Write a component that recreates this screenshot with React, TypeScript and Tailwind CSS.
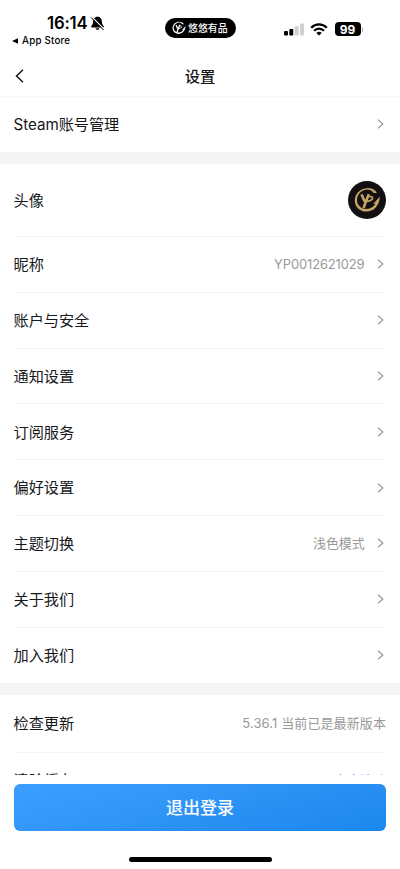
import type { ReactNode } from "react";
import clsx from "clsx";

const FONT = "font-['Inter','Noto_Sans_CJK_SC',sans-serif]";

interface Item {
  label: string;
  value?: string;
}

const items: Item[] = [
  { label: "昵称", value: "YP0012621029" },
  { label: "账户与安全" },
  { label: "通知设置" },
  { label: "订阅服务" },
  { label: "偏好设置" },
  { label: "主题切换", value: "浅色模式" },
  { label: "关于我们" },
  { label: "加入我们" },
];

function Chevron() {
  return (
    <svg width="7" height="10" viewBox="0 0 7 10" fill="none" className="ml-3 mr-[2.5px] shrink-0">
      <path d="M1 .6 5.8 5 1 9.4" stroke="#909094" strokeWidth="1.1" />
    </svg>
  );
}

function BrandMark({ className, color }: { className: string; color: string }) {
  return (
    <svg viewBox="0 0 38 38" fill="none" className={className}>
      {/* Open ring ending in an arrow head on the right */}
      <path
        d="M28.600 11.800C26.500 8.200 22.500 6.600 18.300 7.100 11.500 7.800 6.700 13 6.700 19.200c0 6.300 5 11 11.300 11 7.300 0 12.600-5.200 13.600-14.900l-6.800 7.300 2.300-.3c-1.600 3.500-4.800 5.300-8.600 5.300-5.400 0-9.400-3.500-9.600-8.400-.2-5.700 4-10 9.600-10.800 2.900-.4 5 .9 6.700 3.400z"
        fill={color}
      />
      <path d="M13.300 13.200 16.600 20.500M20.500 13l-5.200 13.600" stroke={color} strokeWidth="2.500" />
      <path d="M20.200 15.600c5.700-1.600 5.600 3.700-1.400 4.500" stroke={color} strokeWidth="1.600" />
    </svg>
  );
}

function Row({
  label,
  children,
  className = "h-[55.8px] border-[#f5f5f5]",
}: {
  label: string;
  children?: ReactNode;
  className?: string;
}) {
  return (
    <div className={clsx("mx-[14px] flex shrink-0 items-center border-b", className)}>
      <span className="-ml-[0.5px] flex-1 pt-px text-[15.2px] leading-none tracking-[-0.05px] text-[#17181c]">
        {label}
      </span>
      {children}
    </div>
  );
}

function StatusBar() {
  return (
    <div className="flex h-[56px] shrink-0 text-black">
      <div className="w-[164.5px] pt-[13px]">
        <div className="flex h-[20px] items-center pl-[47px]">
          <span className="text-[16.8px] font-semibold leading-[20px] tracking-[-0.2px]">16:14</span>
          <svg width="15" height="15" viewBox="0 0 15 15" className="ml-[3px]">
            <path
              d="M7.500.8C4.300.8 3.200 3.300 3.100 5.600 3 8.300 2.300 9 1.300 10.100c-.4.5-.2 1.300.5 1.300h11.400c.7 0 .9-.8.5-1.300-1-1.100-1.700-1.800-1.800-4.500C11.800 3.300 10.700.8 7.500.8z"
              fill="#000"
            />
            <path d="M5.600 12.300h3.800c-.3 2-3.500 2-3.800 0z" fill="#000" />
            <path d="M2.100 1.300 13.700 12.900" stroke="#fff" strokeWidth="1.300" />
            <path d="M1.200 1.600 13.500 13.900" stroke="#000" strokeWidth="1" strokeLinecap="round" />
          </svg>
        </div>
        <div className="flex h-[14px] items-center pt-px pl-[12px]">
          <svg width="6" height="6" viewBox="0 0 6 6">
            <path d="M0 3 6 .2v5.600z" fill="#000" />
          </svg>
          <span className="ml-[4px] text-[9.800px] font-medium leading-[14px] tracking-[0.200px]">
            App Store
          </span>
        </div>
      </div>
      <div className="mt-[18px] flex h-[20px] w-[71px] items-center rounded-full bg-black pl-[4.500px] text-white">
        <BrandMark className="size-[20px]" color="#fff" />
        <span className="-ml-px pt-px text-[9.900px] font-medium leading-none whitespace-nowrap">悠悠有品</span>
      </div>
      <div className="mt-[22px] ml-[48px] flex h-[14px] items-center">
        <svg width="20" height="13" viewBox="0 0 20 13">
          <rect x="0" y="8" width="4" height="4.500" rx="1" fill="#000" />
          <rect x="5.300" y="6" width="4" height="6.500" rx="1" fill="#000" />
          <rect x="10.700" y="3.200" width="4" height="9.300" rx="1" fill="#d0d0d0" />
          <rect x="16" y=".5" width="4" height="12" rx="1" fill="#d0d0d0" />
        </svg>
        <svg width="18" height="13" viewBox="0 0 18 13" fill="none" className="ml-[6px]">
          <path d="M1.200 4.800c4.400-4.500 11.200-4.500 15.600 0" stroke="#000" strokeWidth="2.300" />
          <path d="M4 7.700c2.900-2.900 7.100-2.900 10 0" stroke="#000" strokeWidth="2.200" />
          <path d="M9 12.500 6.300 9.900c1.500-1.400 3.900-1.400 5.400 0z" fill="#000" />
        </svg>
        <div className="ml-[7px] flex h-[14px] w-[26px] items-center justify-center rounded-[4px] bg-black pt-px text-[12px] font-bold leading-none text-white">
          99
        </div>
        <div className="ml-px h-[5px] w-[1.500px] rounded-r-full bg-[#aaa]" />
      </div>
    </div>
  );
}

export default function App() {
  return (
    <div className={clsx("flex h-[869px] w-[400px] flex-col overflow-hidden bg-white", FONT)}>
      <StatusBar />

      {/* Title bar */}
      <header className="grid h-[41px] shrink-0 grid-cols-3 items-center border-b border-[#f7f7f7] px-[15px]">
        <svg width="9" height="14" viewBox="0 0 9 14" fill="none">
          <path d="M8 .7 1.500 7 8 13.300" stroke="#17181c" strokeWidth="1.500" />
        </svg>
        <h1 className="pt-px text-center text-[15.300px] font-medium leading-none text-[#17181c]">设置</h1>
      </header>

      {/* Scrolling list, cut off above the footer */}
      <main className="flex h-[678px] shrink-0 flex-col overflow-hidden">
        <Row label="Steam账号管理" className="h-[55px] border-transparent">
          <Chevron />
        </Row>
        <div className="h-[12px] shrink-0 bg-[#f4f4f4]" />

        <div className="mx-[14px] flex h-[73px] shrink-0 items-center justify-between border-b border-[#f5f5f5]">
          <span className="-ml-[0.5px] pt-px text-[15.200px] leading-none text-[#17181c]">头像</span>
          <div className="size-[38.500px] rounded-full bg-[#121013]">
            <BrandMark className="size-full" color="#c9a563" />
          </div>
        </div>
        {items.map((item) => (
          <Row
            key={item.label}
            label={item.label}
            className={
              item.label === "加入我们" ? "h-[55.5px] border-transparent" : "h-[55.8px] border-[#f5f5f5]"
            }
          >
            {item.value && (
              <span className="pt-px text-[13px] leading-none tracking-[-0.15px] text-[#999]">
                {item.value}
              </span>
            )}
            <Chevron />
          </Row>
        ))}

        <div className="h-[12px] shrink-0 bg-[#f4f4f4]" />
        <Row label="检查更新" className="h-[58px] border-[#f5f5f5]">
          <span className="text-[13px] leading-none tracking-[0.100px] text-[#999]">5.36.1 当前已是最新版本</span>
        </Row>
        <Row label="清除缓存" className="h-[56px] border-[#f5f5f5]">
          <span className="text-[13px] leading-none text-[#2f96f7]">点击清除</span>
        </Row>
      </main>

      <footer className="flex flex-1 flex-col items-center px-[14px] pt-[9px]">
        <button className="h-[47px] w-full rounded-[6px] bg-linear-165 from-[#3c9fff] to-[#1b87ec] pt-px text-[17px] font-medium leading-none text-white">
          退出登录
        </button>
        <div className="mt-[26px] h-[5px] w-[143px] rounded-full bg-black" />
      </footer>
    </div>
  );
}
